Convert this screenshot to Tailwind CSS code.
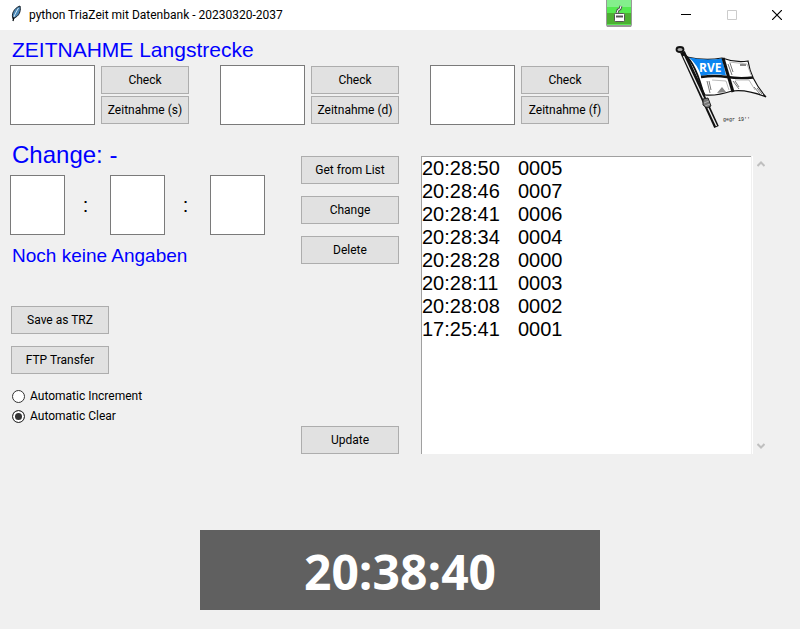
<!DOCTYPE html>
<html lang="de">
<head>
<meta charset="utf-8">
<meta name="viewport" content="width=device-width, initial-scale=1">
<title>python TriaZeit mit Datenbank - 20230320-2037</title>
<script src="https://cdn.jsdelivr.net/npm/@tailwindcss/browser@4"></script>
</head>
<body class="min-h-screen bg-[#f0f0f0] font-[Roboto,sans-serif] text-[12px] leading-4 text-black">
<header class="relative flex h-[30px] items-center bg-white pl-2">
  <svg class="h-5 w-4" viewBox="0 0 16 20" aria-hidden="true">
    <path d="M5 14C3 9 6 3 12 1c1 3 0 9-4 11l-3 2z" fill="#4a86b4" stroke="#18222c" stroke-width="1"/>
    <path d="M10.500 3C8 7 6 11 4.500 16" fill="none" stroke="#cfe4f2" stroke-width="1"/>
    <path d="M6 12l-1 4" stroke="#000" stroke-width="1.200"/>
  </svg>
  <h1 class="ml-[5px] flex-1">python TriaZeit mit Datenbank - 20230320-2037</h1>
  <svg class="absolute right-[167px] top-0 h-7 w-7" viewBox="0 0 28 28" aria-hidden="true">
    <path d="M1 0h26v25l-1 2H2l-1-2z" fill="#999"/>
    <path d="M2 0h24v8H2z" fill="#84ef8c"/><path d="M2 7h24v6H2z" fill="#55ea50"/><path d="M2 13h24v11H2z" fill="#4caf32"/><path d="M2 24h24v1H2z" fill="#5ae552"/>
    <path d="M12 13l1-3 2-1 1-3" fill="none" stroke="#555" stroke-width="3"/><path d="M12 13l1-3 2-1 1-3" fill="none" stroke="#fff" stroke-width="1"/>
    <rect x="9.500" y="13.500" width="10" height="8" rx="1" fill="#fff" stroke="#555"/><path d="M11 16.500h7" stroke="#555" stroke-width="2"/>
  </svg>
  <div class="flex h-full">
    <button type="button" aria-label="Minimieren" class="grid w-[46px] place-items-center"><svg class="h-[10px] w-[10px]" viewBox="0 0 10 10"><path d="M0 4.500h10" stroke="#000"/></svg></button>
    <button type="button" aria-label="Maximieren" disabled class="grid w-[45px] place-items-center"><svg class="h-[10px] w-[10px]" viewBox="0 0 10 10"><path d="M.5.5h9v9h-9z" fill="none" stroke="#ccc"/></svg></button>
    <button type="button" aria-label="Schließen" class="grid w-[46px] place-items-center"><svg class="h-[10px] w-[10px]" viewBox="0 0 10 10"><path d="M0 0l10 10M10 0L0 10" stroke="#000" stroke-width="1.200"/></svg></button>
  </div>
</header>
<main class="px-[10px]">
  <section class="flex justify-between pt-2">
    <div>
      <h2 class="pl-[2px] font-['Liberation_Sans',sans-serif] text-[21px] leading-6 text-[#0000ff]">ZEITNAHME Langstrecke</h2>
      <div class="mt-[3px] flex gap-[30px]">
        <div class="flex w-[180px] items-center gap-[5px]">
          <input aria-label="Startnummer (s)" class="h-[60px] w-[85px] border border-[#7a7a7a] bg-white px-1 text-xl">
          <div class="grid w-[90px] gap-[2px] px-[1px]">
            <button type="button" class="h-7 border border-[#adadad] bg-[#e1e1e1]">Check</button>
            <button type="button" class="h-7 border border-[#adadad] bg-[#e1e1e1]">Zeitnahme (s)</button>
          </div>
        </div>
        <div class="flex w-[180px] items-center gap-[5px]">
          <input aria-label="Startnummer (d)" class="h-[60px] w-[85px] border border-[#7a7a7a] bg-white px-1 text-xl">
          <div class="grid w-[90px] gap-[2px] px-[1px]">
            <button type="button" class="h-7 border border-[#adadad] bg-[#e1e1e1]">Check</button>
            <button type="button" class="h-7 border border-[#adadad] bg-[#e1e1e1]">Zeitnahme (d)</button>
          </div>
        </div>
        <div class="flex w-[180px] items-center gap-[5px]">
          <input aria-label="Startnummer (f)" class="h-[60px] w-[85px] border border-[#7a7a7a] bg-white px-1 text-xl">
          <div class="grid w-[90px] gap-[2px] px-[1px]">
            <button type="button" class="h-7 border border-[#adadad] bg-[#e1e1e1]">Check</button>
            <button type="button" class="h-7 border border-[#adadad] bg-[#e1e1e1]">Zeitnahme (f)</button>
          </div>
        </div>
      </div>
    </div>
    <svg class="mr-[10px] h-[100px] w-[115px]" viewBox="0 3 115 100" role="img" aria-label="RVE Flagge">
      <path d="M22 22Q40 26 57 23Q70 28 83 26Q86 45 101 62Q82 54 67 56Q52 61 40 60Z" fill="#fff" stroke="#111" stroke-width="1.200"/>
      <path d="M24 22.500Q41 26 57 23.500L61 40.500Q48 38 36 41Q33 30 24 22.500Z" fill="#0b84f0"/>
      <path d="M58 23L68 57" stroke="#111" stroke-width="3"/>
      <path d="M36 42Q50 40 62 42T88 42.500" fill="none" stroke="#111" stroke-width="2.400"/>
      <path d="M63 29l4 11M65 28l3 9M42 46l3 12M44 46l2 9M68 46l6 8M70 46l4 6M92 53l5 6M89 52l6 7" stroke="#777" stroke-width="1"/>
      <path d="M52 58l5-6 4 5zM75 29h6v2h-6z" fill="#888"/>
      <path d="M64 27l18 2 4 11M47 45l14 1 3 9M70 45h14l6 10" fill="none" stroke="#aaa" stroke-width=".8"/>
      <path d="M17.500 17L51.500 92" stroke="#111" stroke-width="5"/>
      <path d="M18.500 21L51.500 91" stroke="#eee" stroke-width="1.300"/>
      <path d="M20 20Q31 29 39 61" fill="none" stroke="#111" stroke-width="1.800"/>
      <ellipse cx="15" cy="14.500" rx="3.500" ry="2.500" fill="#aaa" stroke="#111" stroke-width="1.800"/>
      <path d="M38 64l5-1 3 8-4 2-4-3z" fill="#777" stroke="#222"/>
      <path d="M39 68l5-2M40 71l5-2" stroke="#ccc" stroke-width=".7"/>
      <text x="34" y="37" class="font-['Open_Sans',sans-serif] text-[12px] font-bold" fill="#fff">RVE</text>
      <text x="58" y="86" class="font-['Liberation_Mono',monospace] text-[5px]" fill="#222">gegr 19''</text>
    </svg>
  </section>
  <section class="mt-[2px] flex">
    <div class="w-[290px]">
      <h2 class="pl-[2px] pt-[1px] font-['Liberation_Sans',sans-serif] text-[24px] leading-7 text-[#0000ff]">Change: -</h2>
      <div class="mt-[6px] flex items-center font-['Liberation_Sans',sans-serif] text-[20px]">
        <input aria-label="Stunden" class="h-[60px] w-[55px] border border-[#7a7a7a] bg-white px-1">
        <span class="w-[45px] pr-1 text-center">:</span>
        <input aria-label="Minuten" class="h-[60px] w-[55px] border border-[#7a7a7a] bg-white px-1">
        <span class="w-[45px] pr-1 text-center">:</span>
        <input aria-label="Sekunden" class="h-[60px] w-[55px] border border-[#7a7a7a] bg-white px-1">
      </div>
      <p class="mt-[9px] pl-[2px] font-['Liberation_Sans',sans-serif] text-[19px] leading-6 text-[#0000ff]">Noch keine Angaben</p>
      <div class="mt-[38px] grid w-[100px] gap-3 px-[1px]">
        <button type="button" class="h-7 border border-[#adadad] bg-[#e1e1e1]">Save as TRZ</button>
        <button type="button" class="h-7 border border-[#adadad] bg-[#e1e1e1]">FTP Transfer</button>
      </div>
      <fieldset class="mt-3 pl-[2px]">
        <label class="flex h-5 items-center gap-[5px]"><input type="radio" name="mode" class="h-[13px] w-[13px] appearance-none rounded-full border border-[#333] bg-white checked:bg-[#333] checked:shadow-[inset_0_0_0_2px_#fff]">Automatic Increment</label>
        <label class="flex h-5 items-center gap-[5px]"><input type="radio" name="mode" checked class="h-[13px] w-[13px] appearance-none rounded-full border border-[#333] bg-white checked:bg-[#333] checked:shadow-[inset_0_0_0_2px_#fff]">Automatic Clear</label>
      </fieldset>
    </div>
    <div class="mt-4 flex w-[100px] flex-col gap-3 px-[1px]">
      <button type="button" class="h-7 border border-[#adadad] bg-[#e1e1e1]">Get from List</button>
      <button type="button" class="h-7 border border-[#adadad] bg-[#e1e1e1]">Change</button>
      <button type="button" class="h-7 border border-[#adadad] bg-[#e1e1e1]">Delete</button>
      <button type="button" class="mt-auto h-7 border border-[#adadad] bg-[#e1e1e1]">Update</button>
    </div>
    <div class="ml-[21px] mr-5 mt-4 flex h-[298px] flex-1">
      <div class="flex-1 border-l border-t border-[#a0a0a0] bg-white">
        <table class="font-['Liberation_Sans',sans-serif] text-[20px] leading-[23px]">
          <tbody>
            <tr><td class="w-24 p-0">20:28:50</td><td class="p-0">0005</td></tr>
            <tr><td class="p-0">20:28:46</td><td class="p-0">0007</td></tr>
            <tr><td class="p-0">20:28:41</td><td class="p-0">0006</td></tr>
            <tr><td class="p-0">20:28:34</td><td class="p-0">0004</td></tr>
            <tr><td class="p-0">20:28:28</td><td class="p-0">0000</td></tr>
            <tr><td class="p-0">20:28:11</td><td class="p-0">0003</td></tr>
            <tr><td class="p-0">20:28:08</td><td class="p-0">0002</td></tr>
            <tr><td class="p-0">17:25:41</td><td class="p-0">0001</td></tr>
          </tbody>
        </table>
      </div>
      <div class="ml-px flex w-[18px] flex-col justify-between border-l border-white py-[5px] pl-1">
        <button type="button" aria-label="Nach oben"><svg class="h-[6px] w-[8px]" viewBox="0 0 8 6"><path d="M.5 5L4 1.500 7.500 5" fill="none" stroke="#bfbfbf" stroke-width="2"/></svg></button>
        <button type="button" aria-label="Nach unten"><svg class="h-[6px] w-[8px]" viewBox="0 0 8 6"><path d="M.5 1L4 4.500 7.500 1" fill="none" stroke="#bfbfbf" stroke-width="2"/></svg></button>
      </div>
    </div>
  </section>
  <div class="mx-auto mt-[76px] grid h-20 w-1/2 min-w-[400px] place-items-center bg-[#606060] pt-1 font-['Open_Sans',sans-serif] text-[48px] font-bold leading-none text-white"><time>20:38:40</time></div>
</main>
</body>
</html>
